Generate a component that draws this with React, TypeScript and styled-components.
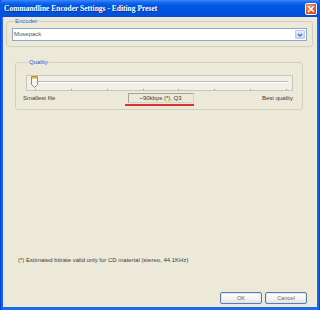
import React from "react";
import styled, { createGlobalStyle } from "styled-components";

const GlobalStyle = createGlobalStyle`
  html, body { margin: 0; padding: 0; background: #0B4FD8; }
  * { box-sizing: border-box; }
`;

const Window = styled.div`
  width: 320px;
  height: 310px;
  display: flex;
  flex-direction: column;
  background: linear-gradient(90deg, #0831D9 0px, #166AEE 2px, #166AEE 318px, #0831D9 320px);
  font-family: "Liberation Sans", "DejaVu Sans", sans-serif;
  font-size: 6px;
  color: #3C3C3C;
`;

const TitleBar = styled.div`
  height: 17px;
  flex: none;
  display: flex;
  align-items: center;
  justify-content: space-between;
  padding: 0 3px 0 4px;
  background: linear-gradient(180deg, #3D8CF7 0px, #1E6CF0 2px, #0058E6 5px, #0054E0 12px, #0A4CD6 17px);
  border-radius: 3px 3px 0 0;
`;

const Title = styled.span`
  font-family: "Liberation Serif", "DejaVu Serif", serif;
  font-weight: bold;
  font-size: 7.5px;
  color: #fff;
  text-shadow: 1px 1px 0 #0A2F8C;
  white-space: nowrap;
`;

const CloseButton = styled.div`
  width: 12px;
  height: 12px;
  border: 1px solid #fff;
  border-radius: 2px;
  background: radial-gradient(circle at 35% 30%, #F29A75 0%, #E2552B 60%, #C0391B 100%);
  display: flex;
  align-items: center;
  justify-content: center;
`;

const Client = styled.div`
  flex: 1;
  margin: 0 3px 3px 3px;
  background: #ECE9D8;
  display: flex;
  flex-direction: column;
`;

const Group = styled.fieldset<{ $m: string; $p: string }>`
  margin: ${(p) => p.$m};
  padding: ${(p) => p.$p};
  border: 1px solid #D0D0BF;
  border-radius: 3px;
  min-width: 0;
`;

const Legend = styled.legend`
  color: #1E5BD6;
  font-size: 6px;
  line-height: 7px;
  padding: 0 1px;
  margin-left: 2px;
`;

const Combo = styled.div`
  height: 13px;
  background: #fff;
  border: 1px solid #8FA8C4;
  display: flex;
  align-items: center;
  justify-content: space-between;
  padding: 0 1px 0 1px;
`;

const ComboText = styled.span`
  color: #555;
  font-size: 6px;
  line-height: 7px;
`;

const DropButton = styled.div`
  width: 10px;
  height: 9px;
  border: 1px solid #B9CBF5;
  border-radius: 1px;
  background: linear-gradient(180deg, #E2EBFE 0%, #C5D5FA 100%);
  display: flex;
  align-items: center;
  justify-content: center;
`;

const SliderBox = styled.div`
  height: 16px;
  border: 1px solid #C9C7BA;
  background: #F2F0E6;
  display: flex;
  flex-direction: column;
  padding: 0 4px 0 6px;
`;

const TrackRow = styled.div`
  height: 12px;
  display: flex;
  align-items: center;
  position: relative;
`;

const Groove = styled.div`
  flex: 1;
  height: 2px;
  border-top: 1px solid #BDBBAD;
  border-bottom: 1px solid #FFFFFF;
  background: #E8E6DA;
`;

const Thumb = styled.svg`
  position: absolute;
  left: -2px;
  top: 0px;
`;

const Ticks = styled.div`
  display: flex;
  justify-content: space-between;
  padding: 1px 1px 0 2px;
`;

const Tick = styled.span`
  width: 1px;
  height: 1px;
  background: #9A988A;
`;

const LabelRow = styled.div`
  display: grid;
  grid-template-columns: 1fr auto 1fr;
  align-items: center;
  margin: 2px 0 0 -3px;
`;

const SideLabel = styled.span<{ $right?: boolean }>`
  justify-self: ${(p) => (p.$right ? "end" : "start")};
  line-height: 7px;
  margin-top: -2px;
`;

const ValueWrap = styled.div`
  display: flex;
  flex-direction: column;
  align-items: flex-end;
  margin-left: 2px;
`;

const ValueBox = styled.div`
  width: 66px;
  height: 10px;
  border: 1px solid #A7A597;
  border-right-color: #D6D4C6;
  border-bottom-color: #D6D4C6;
  display: flex;
  align-items: center;
  justify-content: center;
  line-height: 7px;
`;

const RedMark = styled.div`
  width: 69px;
  height: 2px;
  background: #E0302A;
  margin-top: 1px;
`;

const Spacer = styled.div`
  flex: 1;
`;

const Footnote = styled.div`
  margin: 0 0 28px 15px;
  line-height: 7px;
  white-space: nowrap;
`;

const ButtonRow = styled.div`
  display: flex;
  justify-content: flex-end;
  gap: 3px;
  margin: 0 10px 3px 0;
`;

const Button = styled.div`
  width: 42px;
  height: 12px;
  border: 1px solid #5C7BA6;
  border-radius: 2px;
  background: linear-gradient(180deg, #FFFFFF 0%, #F4F3EE 60%, #E3E1D6 100%);
  box-shadow: inset 0 0 0 1px #DCE6F6;
  display: flex;
  align-items: center;
  justify-content: center;
  color: #666;
  font-size: 5.6px;
`;

const tickCount = 8;

export default function App() {
  return (
    <>
      <GlobalStyle />
      <Window>
        <TitleBar>
          <Title>Commandline Encoder Settings - Editing Preset</Title>
          <CloseButton>
            <svg width="8" height="8" viewBox="0 0 8 8">
              <path d="M1.5 1.5 L6.5 6.5 M6.5 1.5 L1.5 6.5" stroke="#fff" strokeWidth="1.4" strokeLinecap="square" />
            </svg>
          </CloseButton>
        </TitleBar>
        <Client>
          <Group $m="1px 4px 0 3px" $p="3px 5px 5px 5px">
            <Legend>Encoder</Legend>
            <Combo>
              <ComboText>Musepack</ComboText>
              <DropButton>
                <svg width="6" height="4" viewBox="0 0 6 4">
                  <path d="M0.8 0.8 L3 3 L5.2 0.8" stroke="#4D6185" strokeWidth="1.2" fill="none" />
                </svg>
              </DropButton>
            </Combo>
          </Group>
          <Group $m="12px 14px 0 12px" $p="9px 9px 3px 10px">
            <Legend>Quality</Legend>
            <SliderBox>
              <TrackRow>
                <Groove />
                <Thumb width="7" height="12" viewBox="0 0 7 12">
                  <path d="M0.5 0.5 H6.5 V8.5 L3.5 11.5 L0.5 8.5 Z" fill="#F7F6F1" stroke="#8E8C7E" strokeWidth="1" />
                  <rect x="1" y="1" width="5" height="2" fill="#F2C24A" />
                </Thumb>
              </TrackRow>
              <Ticks>
                {Array.from({ length: tickCount }).map((_, i) => (
                  <Tick key={i} />
                ))}
              </Ticks>
            </SliderBox>
            <LabelRow>
              <SideLabel>Smallest file</SideLabel>
              <ValueWrap>
                <ValueBox>~90kbps (*), Q3</ValueBox>
                <RedMark />
              </ValueWrap>
              <SideLabel $right>Best quality</SideLabel>
            </LabelRow>
          </Group>
          <Spacer />
          <Footnote>(*) Estimated bitrate valid only for CD material (stereo, 44.1KHz)</Footnote>
          <ButtonRow>
            <Button>OK</Button>
            <Button>Cancel</Button>
          </ButtonRow>
        </Client>
      </Window>
    </>
  );
}
